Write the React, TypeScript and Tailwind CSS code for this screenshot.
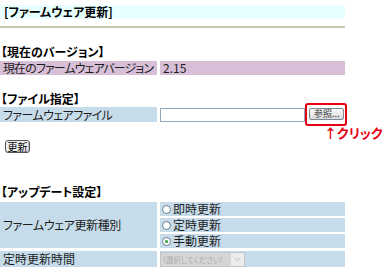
import { ChevronDown } from "lucide-react";

function Title({ children, className = "" }: { children: React.ReactNode; className?: string }) {
  return (
    <div className={`h-[12px] leading-[12px] font-bold text-[12px] text-black whitespace-nowrap pl-[1px] ${className}`}>
      {children}
    </div>
  );
}

function Radio({ label, checked = false }: { label: string; checked?: boolean }) {
  return (
    <div className="h-[14px] bg-[#c6dcea] flex items-center pl-[2px] gap-[2px]">
      <span className="w-[9px] h-[9px] rounded-full border border-[#6d7f91] bg-white flex items-center justify-center">
        {checked && <span className="w-[3px] h-[3px] rounded-full bg-[#2ca02c]" />}
      </span>
      <span>{label}</span>
    </div>
  );
}

export default function App() {
  return (
    <div className="w-[385px] h-[268px] overflow-hidden bg-white text-[12px] leading-[14px] text-[#1c1c1c] font-['Noto_Sans_CJK_JP',sans-serif] [font-feature-settings:'palt']">
      <div className="pt-[5px] w-[345px]">
        <div className="h-[14px] bg-[#e8ffff] pl-[4px] font-bold text-black leading-[14px]">
          [ファームウェア更新]
        </div>
        <div className="mt-[7px] h-[2px] bg-[#c9c9b1]" />

        <Title className="mt-[18px]">【現在のバージョン】</Title>
        <div className="mt-[3px] grid grid-cols-[157px_185px] gap-x-[3px]">
          <div className="h-[14px] bg-[#d8bfd8] pl-[3px] whitespace-nowrap tracking-[-0.9px]">現在のファームウェアバージョン</div>
          <div className="h-[14px] bg-[#d8bfd8] pl-[3px]">2.15</div>
        </div>

        <Title className="mt-[18px]">【ファイル指定】</Title>
        <div className="mt-[2px] grid grid-cols-[157px_185px] gap-x-[3px]">
          <div className="h-[15px] bg-[#c6dcea] pl-[3px] leading-[15px] whitespace-nowrap tracking-[-0.6px]">ファームウェアファイル</div>
          <div className="h-[15px] flex items-end gap-[4px]">
            <div className="w-[145px] h-[14px] border border-[#8ea8c2] bg-white" />
            <div className="relative mb-[2px]">
              <div className="w-[35px] h-[12px] rounded-[2px] border border-[#7a8898] bg-gradient-to-b from-[#fbfbfb] to-[#d9d9d9] text-[9px] leading-[10px] text-[#333] pl-[4px]">
                参照...
              </div>
              <div className="absolute -left-[4px] -top-[5px] w-[42px] h-[23px] rounded-[3px] border-2 border-[#e60012]" />
            </div>
          </div>
        </div>
      </div>

      <div className="mt-[4px] ml-[324px] h-[14px] leading-[14px] text-[13px] font-bold text-[#e60012] whitespace-nowrap">
        ↑クリック
      </div>

      <button className="ml-[5px] w-[25px] h-[13px] rounded-[3px] border border-[#555] bg-[#f0f0f0] text-[10px] leading-[11px] text-black flex items-center justify-center shadow-[inset_-1px_-1px_0_#bbb]">
        更新
      </button>

      <div className="w-[345px]">
        <Title className="mt-[33px]">【アップデート設定】</Title>
        <div className="mt-[4px] grid grid-cols-[157px_185px] gap-x-[3px] gap-y-[2px]">
          <div className="row-span-3 bg-[#c6dcea] pl-[3px] flex items-center whitespace-nowrap tracking-[-0.4px]">ファームウェア更新種別</div>
          <Radio label="即時更新" />
          <Radio label="定時更新" />
          <Radio label="手動更新" checked />
          <div className="mt-[1px] h-[16px] bg-[#c6dcea] pl-[3px] leading-[16px]">定時更新時間</div>
          <div className="mt-[1px] h-[16px] bg-[#c6dcea] flex items-center">
            <div className="w-[85px] h-[15px] flex border border-[#c4c4c4] bg-[#d6d6d6]">
              <div className="flex-1 text-[7.5px] leading-[13px] text-[#ababab] pl-[1px] whitespace-nowrap overflow-hidden">
                （選択してください）
              </div>
              <div className="w-[13px] bg-[#ececec] flex items-center justify-center">
                <ChevronDown size={9} strokeWidth={2} color="#aaaaaa" />
              </div>
            </div>
          </div>
        </div>
      </div>
    </div>
  );
}
